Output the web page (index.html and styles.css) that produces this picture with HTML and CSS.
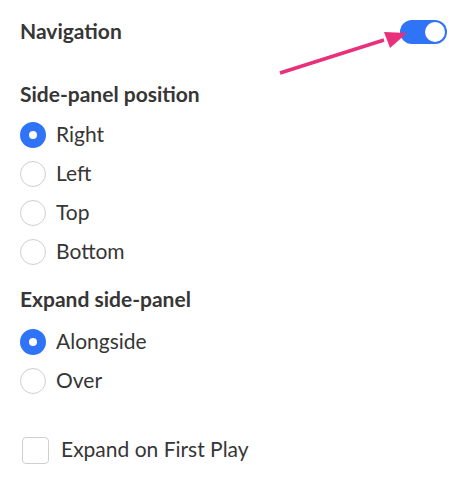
FILE: index.html
```html
<!DOCTYPE html>
<html lang="en">
<head>
    <meta charset="UTF-8">
    <title>Navigation settings</title>
    <link rel="stylesheet" href="styles.css">
</head>
<body>
    <div class="panel">
        <div class="setting-header">
            <span class="setting-title">Navigation</span>
            <label class="switch">
                <input type="checkbox" checked>
                <span class="switch-track"></span>
            </label>
        </div>

        <!-- callout arrow pointing at the toggle -->
        <svg class="callout-arrow" width="140" height="60" viewBox="0 0 140 60">
            <line x1="10" y1="53" x2="114" y2="20" stroke="#e8307b" stroke-width="3.5" stroke-linecap="butt"/>
            <polygon points="137,13 114,12 120,28" fill="#e8307b"/>
        </svg>

        <h3 class="group-title">Side-panel position</h3>
        <div class="radio-group">
            <label class="radio"><input type="radio" name="position" checked><span class="dot"></span><span class="label">Right</span></label>
            <label class="radio"><input type="radio" name="position"><span class="dot"></span><span class="label">Left</span></label>
            <label class="radio"><input type="radio" name="position"><span class="dot"></span><span class="label">Top</span></label>
            <label class="radio"><input type="radio" name="position"><span class="dot"></span><span class="label">Bottom</span></label>
        </div>

        <h3 class="group-title group-title-second">Expand side-panel</h3>
        <div class="radio-group">
            <label class="radio"><input type="radio" name="expand" checked><span class="dot"></span><span class="label">Alongside</span></label>
            <label class="radio"><input type="radio" name="expand"><span class="dot"></span><span class="label">Over</span></label>
        </div>

        <label class="check">
            <input type="checkbox">
            <span class="box"></span>
            <span class="label">Expand on First Play</span>
        </label>
    </div>
</body>
</html>
```

FILE: styles.css
```css
:root {
    --blue: #2f73f7;
    --text: #363636;
    --border: #cfcfcf;
}

body {
    margin: 0;
    font-family: Lato, 'Open Sans', sans-serif;
    color: var(--text);
    background: #ffffff;
}

.panel {
    position: relative;
    padding: 20px 19px 0 20px;
}

.setting-header {
    display: flex;
    justify-content: space-between;
    align-items: center;
    height: 24px;
}

.setting-title {
    font-size: 21px;
    font-weight: 700;
    padding-bottom: 3px;
}

.switch {
    position: relative;
    display: block;
    width: 47px;
    height: 24px;
    z-index: 0;
}

.switch input {
    display: none;
}

.switch-track {
    display: block;
    width: 100%;
    height: 100%;
    border-radius: 12px;
    background: var(--blue);
    position: relative;
}

.switch-track::after {
    content: "";
    position: absolute;
    right: 2px;
    top: 2px;
    width: 20px;
    height: 20px;
    border-radius: 50%;
    background: #ffffff;
}

.callout-arrow {
    position: absolute;
    left: 270px;
    top: 20px;
    z-index: 1;
}

.group-title {
    margin: 38px 0 0;
    font-size: 21px;
    font-weight: 700;
    line-height: 24px;
    padding-bottom: 1px;
}

.group-title-second {
    margin-top: 22px;
}

.radio-group {
    display: flex;
    flex-direction: column;
    gap: 13px;
    margin-top: 15px;
}

.group-title-second + .radio-group {
    margin-top: 17px;
}

.radio {
    display: flex;
    align-items: center;
    gap: 10px;
    height: 26px;
    font-size: 21px;
    cursor: pointer;
}

.label {
    padding-bottom: 3px;
}

.radio input {
    display: none;
}

.dot {
    width: 26px;
    height: 26px;
    box-sizing: border-box;
    border: 1px solid var(--border);
    border-radius: 50%;
    flex-shrink: 0;
}

.radio input:checked + .dot {
    border: 9px solid var(--blue);
    background: #ffffff;
}

.check {
    display: flex;
    align-items: center;
    gap: 12px;
    margin-top: 42px;
    padding-left: 2px;
    font-size: 21px;
    cursor: pointer;
}

.check input {
    display: none;
}

.box {
    width: 27px;
    height: 27px;
    box-sizing: border-box;
    border: 1px solid var(--border);
    border-radius: 4px;
}
```
